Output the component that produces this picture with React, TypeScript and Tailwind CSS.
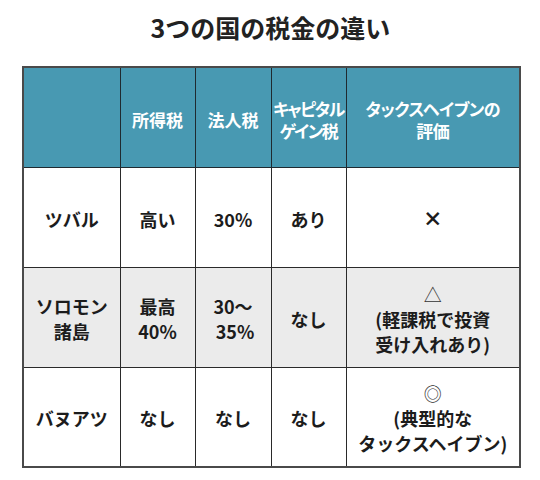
import type { ReactNode } from "react"

type Row = { bg: string; cells: ReactNode[] }

const rows: Row[] = [
  {
    bg: "bg-white",
    cells: ["ツバル", "高い", "30%", "あり", <span className="text-[20px] font-black">×</span>]
  },
  {
    bg: "bg-[#ebebeb]",
    cells: [
      <>ソロモン<br />諸島</>,
      <>最高<br />40%</>,
      <>30〜<br />&nbsp;35%</>,
      "なし",
      <>
        <span className="font-normal text-[#333]">△</span>
        <br />(軽課税で投資
        <br />受け入れあり)
      </>
    ]
  },
  {
    bg: "bg-white",
    cells: [
      "バヌアツ",
      "なし",
      "なし",
      "なし",
      <>
        <span className="font-normal text-[#333]">◎</span>
        <br />(典型的な
        <br />タックスヘイブン)
      </>
    ]
  }
]

const headers: ReactNode[] = [
  "",
  "所得税",
  "法人税",
  <span className="tracking-[-1.5px]">キャピタル<br />ゲイン税</span>,
  <span className="tracking-[-0.5px]">タックスヘイブンの<br />評価</span>
]

export default function App() {
  return (
    <div className="h-[480px] w-[540px] bg-white font-['Noto_Sans_CJK_JP',sans-serif] text-[#1c1c1c]">
      <div className="w-[497px] ml-[22px] pt-[11px]">
        <h1 className="text-center text-[25px] font-bold leading-[33px] text-[#222]">
          3つの国の税金の違い
        </h1>
        <table className="mt-[22px] w-[497px] table-fixed border-collapse border-2 border-[#4a4a4a]">
          <colgroup>
            <col className="w-[97px]" />
            <col className="w-[75px]" />
            <col className="w-[76px]" />
            <col className="w-[75px]" />
            <col className="w-[174px]" />
          </colgroup>
          <thead>
            <tr className="h-[100px] bg-[#4899b2]">
              {headers.map((h, i) => (
                <th
                  className="whitespace-nowrap border border-[#1f2a30] pt-[6px] text-center align-middle text-[17px] font-bold leading-[22px] text-white [font-feature-settings:'palt']"
                  key={i}
                >
                  {h}
                </th>
              ))}
            </tr>
          </thead>
          <tbody>
            {rows.map((r, ri) => (
              <tr className={`h-[100px] ${r.bg}`} key={ri}>
                {r.cells.map((c, ci) => (
                  <td
                    className="whitespace-nowrap border border-[#2a2a2a] pt-[4px] text-center align-middle text-[18px] font-bold leading-[25px]"
                    key={ci}
                  >
                    {c}
                  </td>
                ))}
              </tr>
            ))}
          </tbody>
        </table>
      </div>
    </div>
  )
}
